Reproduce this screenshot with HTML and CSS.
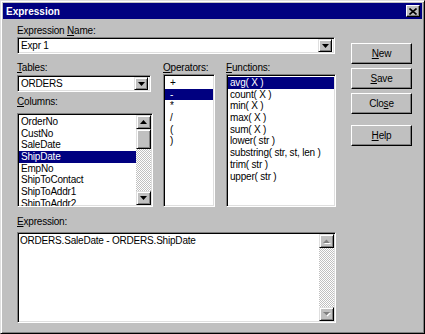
FILE: index.html
```html
<!DOCTYPE html>
<html>
<head>
<meta charset="utf-8">
<link rel="stylesheet" href="styles.css">
</head>
<body>
<div class="window">
  <div class="titlebar">
    <span class="title">Expression</span>
    <span class="close-btn"><svg width="8" height="7" viewBox="0 0 8 7"><path d="M0.5 0.5 L7.5 6.5 M7.5 0.5 L0.5 6.5" stroke="#000" stroke-width="1.6"/></svg></span>
  </div>
  <div class="body">
    <div class="main">
      <div class="lbl">Expression <u>N</u>ame:</div>
      <div class="combo name-combo">
        <span class="combo-value">Expr 1</span>
        <span class="drop-btn"><svg width="7" height="4" viewBox="0 0 7 4"><path d="M0 0H7L3.5 4Z" fill="#000"/></svg></span>
      </div>
      <div class="mid">
        <div class="col-a">
          <div class="lbl"><u>T</u>ables:</div>
          <div class="combo tables-combo">
            <span class="combo-value">ORDERS</span>
            <span class="drop-btn"><svg width="7" height="4" viewBox="0 0 7 4"><path d="M0 0H7L3.5 4Z" fill="#000"/></svg></span>
          </div>
          <div class="lbl lbl-columns"><u>C</u>olumns:</div>
          <div class="listbox columns">
            <ul class="rows">
              <li>OrderNo</li>
              <li>CustNo</li>
              <li>SaleDate</li>
              <li class="sel">ShipDate</li>
              <li>EmpNo</li>
              <li>ShipToContact</li>
              <li>ShipToAddr1</li>
              <li>ShipToAddr2</li>
            </ul>
            <div class="vscroll">
              <span class="sbtn"><svg width="7" height="4" viewBox="0 0 7 4"><path d="M0 4H7L3.5 0Z" fill="#000"/></svg></span>
              <span class="thumb"></span>
              <span class="track"></span>
              <span class="sbtn"><svg width="7" height="4" viewBox="0 0 7 4"><path d="M0 0H7L3.5 4Z" fill="#000"/></svg></span>
            </div>
          </div>
        </div>
        <div class="col-b">
          <div class="lbl"><u>O</u>perators:</div>
          <div class="listbox operators">
            <ul class="rows">
              <li>+</li>
              <li class="sel">-</li>
              <li>*</li>
              <li>/</li>
              <li>(</li>
              <li>)</li>
            </ul>
          </div>
        </div>
        <div class="col-c">
          <div class="lbl"><u>F</u>unctions:</div>
          <div class="listbox functions">
            <ul class="rows">
              <li class="sel">avg( X )</li>
              <li>count( X )</li>
              <li>min( X )</li>
              <li>max( X )</li>
              <li>sum( X )</li>
              <li>lower( str )</li>
              <li>substring( str, st, len )</li>
              <li>trim( str )</li>
              <li>upper( str )</li>
            </ul>
          </div>
        </div>
      </div>
      <div class="lbl lbl-expr"><u>E</u>xpression:</div>
      <div class="listbox expr">
        <div class="expr-text">ORDERS.SaleDate - ORDERS.ShipDate</div>
        <div class="vscroll disabled">
          <span class="sbtn"><svg width="8" height="5" viewBox="0 0 8 5"><path d="M1 5H8L4.5 1.5Z" fill="#fff"/><path d="M0 4H7L3.5 0.5Z" fill="#808080"/></svg></span>
          <span class="track"></span>
          <span class="sbtn"><svg width="8" height="5" viewBox="0 0 8 5"><path d="M1 1H8L4.5 4.5Z" fill="#fff"/><path d="M0 0H7L3.5 3.5Z" fill="#808080"/></svg></span>
        </div>
      </div>
    </div>
    <div class="buttons">
      <span class="btn"><u>N</u>ew</span>
      <span class="btn"><u>S</u>ave</span>
      <span class="btn">Clo<u>s</u>e</span>
      <span class="btn btn-help"><u>H</u>elp</span>
    </div>
  </div>
</div>
</body>
</html>
```
FILE: styles.css
```css
* {
  box-sizing: border-box;
  margin: 0;
  padding: 0;
}

body {
  margin: 0;
  background: #c0c0c0;
}

.window {
  width: 425px;
  height: 334px;
  background: #c0c0c0;
  border: 1px solid;
  border-color: #dfdfdf #000 #000 #dfdfdf;
  box-shadow: inset 1px 1px 0 #fff, inset -1px -1px 0 #808080;
  padding: 2px;
  display: flex;
  flex-direction: column;
  font-family: "Liberation Sans", Arial, sans-serif;
  font-size: 10px;
  letter-spacing: -0.2px;
  color: #000;
}

.titlebar {
  height: 16px;
  background: #000080;
  color: #fff;
  display: flex;
  align-items: center;
  justify-content: space-between;
  padding: 0 2px 0 3px;
  flex: none;
}

.title {
  font-weight: bold;
  font-size: 10px;
  letter-spacing: 0;
}

.close-btn {
  width: 14px;
  height: 12px;
  background: #c0c0c0;
  border: 1px solid;
  border-color: #fff #000 #000 #fff;
  box-shadow: inset -1px -1px 0 #808080;
  display: flex;
  align-items: center;
  justify-content: center;
}

.body {
  display: flex;
  padding: 6px 0 0 14px;
}

.main {
  width: 319px;
  flex: none;
}

.lbl {
  height: 12px;
  line-height: 12px;
  white-space: nowrap;
}

.combo {
  height: 17px;
  background: #fff;
  border: 1px solid;
  border-color: #808080 #fff #fff #808080;
  box-shadow: inset 1px 1px 0 #000, inset -1px -1px 0 #dfdfdf;
  display: flex;
  align-items: center;
  padding: 2px;
}

.name-combo {
  width: 318px;
}

.combo-value {
  flex: 1;
  line-height: 13px;
  padding-left: 1px;
}

.drop-btn {
  width: 14px;
  height: 13px;
  background: #c0c0c0;
  border: 1px solid;
  border-color: #dfdfdf #000 #000 #dfdfdf;
  box-shadow: inset 1px 1px 0 #fff, inset -1px -1px 0 #808080;
  display: flex;
  align-items: center;
  justify-content: center;
  flex: none;
}

.mid {
  display: flex;
  margin-top: 8px;
}

.col-a {
  width: 136px;
  flex: none;
}

.col-b {
  width: 52px;
  margin-left: 10px;
  flex: none;
}

.col-c {
  width: 110px;
  margin-left: 11px;
  flex: none;
}

.tables-combo {
  width: 134px;
  margin-top: 1px;
}

.lbl-columns {
  margin-top: 4px;
}

.listbox {
  background: #fff;
  border: 1px solid;
  border-color: #808080 #fff #fff #808080;
  box-shadow: inset 1px 1px 0 #000, inset -1px -1px 0 #dfdfdf;
  padding: 1px;
  display: flex;
  overflow: hidden;
}

.columns {
  height: 94px;
  margin-top: 5px;
}

.operators,
.functions {
  height: 133px;
}

.rows {
  list-style: none;
  flex: 1;
  min-width: 0;
  padding-top: 1px;
}

.rows li {
  height: 11.7px;
  line-height: 11.7px;
  padding-left: 2px;
  white-space: nowrap;
}

.operators .rows li {
  padding-left: 5px;
}

.rows li.sel {
  background: #000080;
  color: #fff;
}

.vscroll {
  width: 15px;
  flex: none;
  display: flex;
  flex-direction: column;
  background: repeating-conic-gradient(#c0c0c0 0 25%, #fff 0 50%) 0 0 / 2px 2px;
}

.sbtn {
  height: 14px;
  flex: none;
  background: #c0c0c0;
  border: 1px solid;
  border-color: #dfdfdf #000 #000 #dfdfdf;
  box-shadow: inset 1px 1px 0 #fff, inset -1px -1px 0 #808080;
  display: flex;
  align-items: center;
  justify-content: center;
}

.thumb {
  height: 20px;
  flex: none;
  background: #c0c0c0;
  border: 1px solid;
  border-color: #dfdfdf #000 #000 #dfdfdf;
  box-shadow: inset 1px 1px 0 #fff, inset -1px -1px 0 #808080;
}

.track {
  flex: 1;
}

.lbl-expr {
  margin-top: 9px;
}

.expr {
  height: 91px;
  margin-top: 4px;
}

.expr-text {
  flex: 1;
  padding: 1px 0 0 1px;
  line-height: 12px;
  white-space: nowrap;
}

.buttons {
  margin-left: 15px;
  width: 61px;
  display: flex;
  flex-direction: column;
  padding-top: 18px;
}

.btn {
  height: 21px;
  background: #c0c0c0;
  border: 1px solid;
  border-color: #fff #000 #000 #fff;
  box-shadow: inset -1px -1px 0 #808080;
  display: flex;
  align-items: center;
  justify-content: center;
  margin-bottom: 4px;
}

.btn-help {
  margin-top: 7px;
}
```
